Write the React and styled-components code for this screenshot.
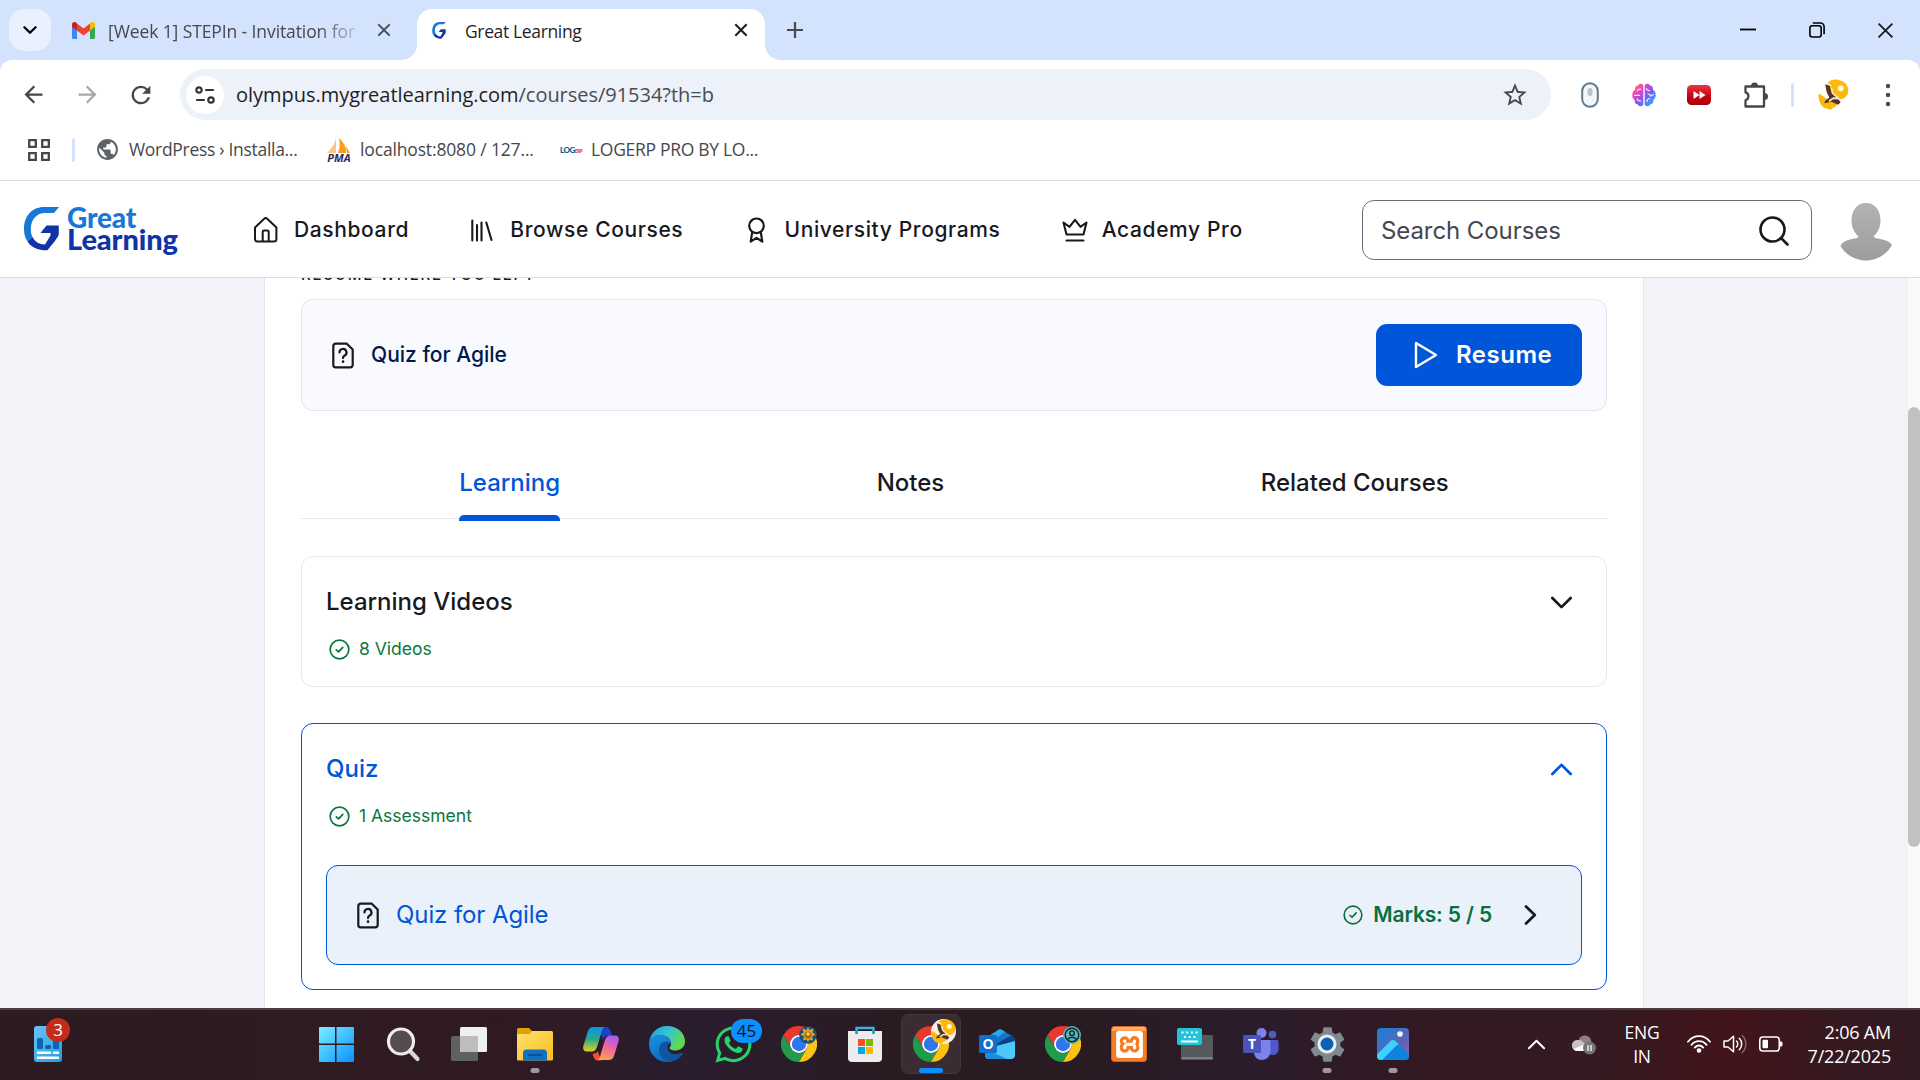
import React from "react";
import styled, { createGlobalStyle } from "styled-components";
import { MdPublic, MdStarBorder, MdSettings, MdArrowBack, MdArrowForward, MdRefresh } from "react-icons/md";
import { FaWhatsapp } from "react-icons/fa";
import { SiXampp } from "react-icons/si";

const GlobalStyle = createGlobalStyle`
  * { box-sizing: border-box; }
  body { margin: 0; background: #fff; overflow: hidden; }
  svg { display: block; flex: none; }
`;

const system = `"Open Sans", "Noto Sans", sans-serif`;
const inter = `Inter, "Liberation Sans", sans-serif`;

const Screen = styled.div`
  width: 1920px;
  height: 1080px;
  display: flex;
  flex-direction: column;
  overflow: hidden;
  font-family: ${inter};
  color: #18191f;
`;

const Label = styled.span`
  white-space: nowrap;
  font-size: ${(p) => p.$size}px;
  font-weight: ${(p) => p.$weight || 400};
  letter-spacing: ${(p) => p.$track || 0}px;
  color: ${(p) => p.$color || "inherit"};
  line-height: 1.3;
`;

/* ---------- Browser chrome ---------- */

const TabStrip = styled.div`
  height: 60px;
  flex: none;
  display: flex;
  background: #d3e2fd;
  font-family: ${system};
`;

const TabSearch = styled.button`
  width: 42px;
  height: 42px;
  margin: 9px 0 0 9px;
  padding: 0;
  border: 0;
  border-radius: 15px;
  background: #e9f0fe;
  display: grid;
  place-items: center;
`;

const Tab = styled.div`
  display: flex;
  align-items: center;
  height: ${(p) => (p.$active ? 51 : 42)}px;
  margin-top: 9px;
  width: ${(p) => p.$width}px;
  padding: 0 ${(p) => p.$right}px ${(p) => (p.$active ? 9 : 0)}px ${(p) => p.$left}px;
  background: ${(p) => (p.$active ? "#fff" : "transparent")};
  border-radius: 15px 15px 0 0;
  color: ${(p) => (p.$active ? "#1f1f1f" : "#46484c")};
  position: relative;

  &::before, &::after {
    content: "";
    display: ${(p) => (p.$active ? "block" : "none")};
    position: absolute;
    bottom: 0;
    width: 15px;
    height: 15px;
  }
  &::before { left: -15px; background: radial-gradient(circle at 0 0, transparent 14.5px, #fff 15px); }
  &::after { right: -15px; background: radial-gradient(circle at 100% 0, transparent 14.5px, #fff 15px); }
`;

const TabTitle = styled.div`
  flex: 1;
  margin-left: ${(p) => p.$gap}px;
  margin-right: 19px;
  font-size: 17.5px;
  letter-spacing: ${(p) => p.$track}px;
  line-height: 24px;
  padding-top: 2px;
  white-space: nowrap;
  overflow: hidden;
  ${(p) => p.$fade && "mask-image: linear-gradient(90deg, #000 84%, rgba(0,0,0,.15));"}
`;

const NewTab = styled.div`
  width: 24px;
  margin-left: 18px;
  height: 60px;
  display: grid;
  place-items: center;
`;

const WindowControls = styled.div`
  margin-left: auto;
  display: flex;
`;

const WindowButton = styled.div`
  width: 69px;
  height: 60px;
  display: grid;
  place-items: center;
`;

const ToolbarWrap = styled.div`
  background: #d3e2fd;
  flex: none;
`;

const Toolbar = styled.div`
  height: 69px;
  display: flex;
  align-items: center;
  background: #fff;
  border-radius: 12px 12px 0 0;
  font-family: ${system};
`;

const NavButtons = styled.div`
  width: 180px;
  padding-left: 6px;
  display: flex;
`;

const ToolButton = styled.div`
  width: ${(p) => p.$w || 54}px;
  height: 51px;
  display: grid;
  place-items: center;
  color: ${(p) => (p.$dim ? "#a7a8a9" : "#454749")};
`;

const Omnibox = styled.div`
  width: 1371px;
  height: 51px;
  border-radius: 26px;
  background: #ecf1fa;
  display: flex;
  align-items: center;
  padding: 0 22px 0 6px;
`;

const SiteInfo = styled.div`
  width: 38px;
  height: 38px;
  margin-right: 12px;
  border-radius: 50%;
  background: #fff;
  display: grid;
  place-items: center;
`;

const Url = styled.div`
  flex: 1;
  font-size: 20px;
  letter-spacing: -0.03px;
  color: #4a4c50;
  line-height: 30px;
  b { font-weight: 400; color: #1f1f1f; }
`;

const Extensions = styled.div`
  margin-left: 12px;
  display: flex;
  align-items: center;
`;

const Divider = styled.div`
  width: 3px;
  height: 24px;
  border-radius: 2px;
  background: #d3e2fd;
`;

const BookmarkBar = styled.div`
  height: 51px;
  flex: none;
  display: flex;
  align-items: center;
  padding: 0 0 10px 28px;
  background: #fff;
  color: #46484c;
  font-family: ${system};
`;

const Bookmark = styled.div`
  width: ${(p) => p.$w}px;
  display: flex;
  align-items: center;
  gap: ${(p) => p.$gap}px;
`;

const PmaIcon = styled.div`
  width: 26px;
  margin-left: -1px;
  display: flex;
  flex-direction: column;
  align-items: center;
  font: italic 700 11px/9px "Open Sans", sans-serif;
  color: #2b2b63;
`;

const LogIcon = styled.div`
  width: 22px;
  font: 900 8px/10px Lato, sans-serif;
  letter-spacing: -0.5px;
  color: #0b5c93;
  display: flex;
  align-items: flex-end;
  span { color: #ee3a6c; font-size: 5px; line-height: 8px; letter-spacing: -0.7px; }
`;

/* ---------- Site header ---------- */

const Header = styled.header`
  height: 98px;
  flex: none;
  display: flex;
  align-items: center;
  border-top: 1px solid #dedee0;
  border-bottom: 1px solid #dcdde0;
  padding: 2px 27px 0 24px;
  background: #fff;
`;

const Logo = styled.div`
  width: 230px;
  display: flex;
  align-items: center;
  gap: 8px;
  padding-bottom: 3px;
`;

const LogoText = styled.div`
  display: flex;
  flex-direction: column;
  font-family: Lato, sans-serif;
  font-weight: 900;
  font-size: 28px;
  line-height: 22px;
  padding-bottom: 2px;
  color: #1034a6;
  span:first-child { color: #1878d8; letter-spacing: -0.2px; }
  span:last-child { font-size: 29px; letter-spacing: -0.1px; }
`;

const Nav = styled.nav`
  display: flex;
  gap: 61.2px;
`;

const NavItem = styled.a`
  display: flex;
  align-items: center;
  gap: 14px;
`;

const SearchBox = styled.div`
  width: 450px;
  height: 60px;
  margin-left: auto;
  border: 1px solid #6b6d7c;
  border-radius: 12px;
  display: flex;
  align-items: center;
  justify-content: space-between;
  padding: 1px 22px 0 18px;
`;

const Avatar = styled.div`
  width: 54px;
  margin: 3px 0 0 27px;
`;

/* ---------- Course page ---------- */

const Page = styled.div`
  height: 730px;
  flex: none;
  display: flex;
  justify-content: space-between;
  overflow: hidden;
  background: #f2f3f8;
`;

const Panel = styled.main`
  width: 1380px;
  margin-left: 264px;
  padding: 0 36px;
  border: solid #e4e5ea;
  border-width: 0 1px;
  background: #fff;
`;

const Eyebrow = styled.div`
  height: 21px;
  display: flow-root;
  font-size: 15px;
  font-weight: 500;
  letter-spacing: 1.8px;
  line-height: 20px;
  white-space: nowrap;
  span { display: block; margin-top: -13px; }
`;

const ResumeCard = styled.section`
  height: 112px;
  padding: 0 24px 0 29px;
  display: flex;
  align-items: center;
  border: 1px solid #e3e5ec;
  border-radius: 12px;
  background: #f9faff;
`;

const ResumeButton = styled.button`
  width: 206px;
  height: 62px;
  margin-left: auto;
  padding: 0 0 0 38px;
  border: 0;
  border-radius: 11px;
  background: #0056d8;
  color: #fff;
  font-family: inherit;
  display: flex;
  align-items: center;
  gap: 18px;
`;

const CourseTabs = styled.div`
  height: 108px;
  margin-bottom: 37px;
  display: flex;
  justify-content: space-around;
  align-items: flex-end;
  border-bottom: 1px solid #e8e8ea;
`;

const CourseTab = styled.div`
  height: 56px;
  padding-top: 2px;
  margin-bottom: -3px;
  color: ${(p) => (p.$active ? "#0056d8" : "#18191f")};
  display: flex;
  flex-direction: column;
  justify-content: space-between;
  &::after {
    content: "";
    height: 6px;
    border-radius: 5px 5px 0 0;
    background: ${(p) => (p.$active ? "#0056d8" : "transparent")};
  }
`;

const Module = styled.section`
  height: ${(p) => p.$height}px;
  margin-bottom: 36px;
  padding: 29px 24px 24px;
  border: 1px solid ${(p) => (p.$open ? "#0056d8" : "#e8e8ea")};
  border-radius: 12px;
`;

const ModuleHead = styled.div`
  display: flex;
  justify-content: space-between;
  align-items: center;
  height: 32px;
  padding-right: 9px;
  color: ${(p) => (p.$open ? "#0056d8" : "#18191f")};
`;

const ModuleMeta = styled.div`
  margin-top: 19px;
  height: 24px;
  padding-left: 3px;
  display: flex;
  align-items: center;
  gap: 9px;
  color: #08783f;
`;

const QuizRow = styled.div`
  margin-top: 37px;
  height: 100px;
  padding: 0 44px 0 29px;
  display: flex;
  align-items: center;
  border: 1px solid #0056d8;
  border-radius: 12px;
  background: #eaf1fb;
`;

const RowTitle = styled.div`
  margin-left: 16px;
  display: flex;
`;

const Marks = styled.div`
  margin-left: auto;
  display: flex;
  align-items: center;
  gap: 10px;
  margin-right: 32px;
  color: #08703c;
`;

const Scrollbar = styled.div`
  width: 12px;
  padding-top: 129px;
  background: #fafafa;
`;

const Thumb = styled.div`
  height: 440px;
  border-radius: 6px;
  background: #c1c1c1;
`;

/* ---------- Taskbar ---------- */

const Taskbar = styled.footer`
  height: 72px;
  flex: none;
  display: flex;
  align-items: center;
  padding-bottom: 2px;
  border-top: 2px solid #4b3d43;
  background: linear-gradient(90deg, #2c1b21 0, #301a21 26%, #2a1d2e 36%, #2a1b22 47%, #2a1a21 56%, #2b1c2c 65%, #331921 75%, #341a21 83%, #42141a 90%, #361920 96%, #311a21 100%);
  font-family: ${system};
  color: #fff;
`;

const WidgetSlot = styled.div`
  width: 304px;
  padding-left: 34px;
`;

const AppSlot = styled.div`
  width: 66px;
  height: 68px;
  display: grid;
  place-items: center;
  position: relative;
  &::after {
    content: "";
    display: ${(p) => (p.$run || p.$active ? "block" : "none")};
    position: absolute;
    left: 50%;
    bottom: 5px;
    width: ${(p) => (p.$active ? 24 : 9)}px;
    height: 5px;
    transform: translateX(-50%);
    border-radius: 3px;
    background: ${(p) => (p.$active ? "#0a91ff" : "#a3989d")};
  }
`;

const Highlight = styled.div`
  width: 60px;
  height: 60px;
  border-radius: 7px;
  border: 1px solid #43353b;
  background: #3a2c32;
  display: grid;
  place-items: center;
`;

const AppIcon = styled.div`
  width: ${(p) => p.$w || 36}px;
  height: 36px;
  position: relative;
  display: grid;
  place-items: center;
`;

const Badge = styled.span`
  position: absolute;
  left: ${(p) => p.$x}px;
  top: ${(p) => p.$y}px;
  width: ${(p) => p.$w}px;
  height: 24px;
  border-radius: 12px;
  background: ${(p) => p.$bg};
  color: ${(p) => p.$fg};
  font-size: 17px;
  line-height: 24px;
  text-align: center;
`;

const Overlay = styled.div`
  position: absolute;
  left: ${(p) => p.$x}px;
  top: ${(p) => p.$y}px;
`;

const Tray = styled.div`
  margin-left: auto;
  padding-right: 29px;
  display: flex;
  align-items: center;
  gap: 12px;
`;

const TrayText = styled.div`
  width: ${(p) => p.$w}px;
  padding-bottom: 1px;
  text-align: ${(p) => p.$align};
  font-size: ${(p) => p.$size}px;
  line-height: 24px;
  letter-spacing: ${(p) => p.$track}px;
  white-space: nowrap;
`;

const Gap = styled.div`
  width: ${(p) => p.$w}px;
`;

/* ---------- Drawings ---------- */

const line = { fill: "none", stroke: "currentColor", strokeLinecap: "round", strokeLinejoin: "round" };

const Cross = ({ size, w }) => (
  <svg width={size} height={size} viewBox="0 0 16 16" {...line} strokeLinecap="butt" strokeWidth={w}>
    <path d="M1.5 1.5l13 13M14.5 1.5l-13 13" />
  </svg>
);

const GmailIcon = () => (
  <svg width="23" height="17" viewBox="0 0 23 17">
    <path d="M0 3v12.500a1.500 1.500 0 0 0 1.500 1.500H5V7z" fill="#4285f4" />
    <path d="M18 7v10h3.500a1.500 1.500 0 0 0 1.500-1.500V3z" fill="#34a853" />
    <path d="M18 2v6.500l5-3.800V2.500C23 0 20.300-.8 18.500.8z" fill="#fbbc04" />
    <path d="M0 2.500v2.200l5 3.800V2L4.500.8C2.700-.8 0 0 0 2.500z" fill="#c5221f" />
    <path d="M5 1.500l6.500 5 6.500-5v7l-6.500 5-6.500-5z" fill="#ea4335" />
  </svg>
);

const GMark = ({ w, h }) => (
  <svg width={w} height={h} viewBox="0 0 35 44">
    <path d="M35 0H20C8 0 0 9 0 22c0 5 1 9 3.500 12.500L8.500 30C7.300 28 6.800 25 6.800 22 7 12 13 6 21 6h9z" fill="#1878d8" />
    <path d="M3.500 34.500L8.500 30c2 4.500 6.500 7.500 12.500 7.500l5.500-9V26h-10l6-7.500h12.300V27c0 3-8 12-11.300 16.300C14 43.500 7 40 3.500 34.500z" fill="#1034a6" />
  </svg>
);

const TuneIcon = () => (
  <svg width="20" height="18" viewBox="0 0 20 18" {...line} strokeWidth="2.200" color="#333">
    <circle cx="4" cy="4" r="2.700" /><path d="M11 4h7" />
    <circle cx="16" cy="14" r="2.700" /><path d="M2 14h7" />
  </svg>
);

const MouseIcon = () => (
  <svg width="18" height="26" viewBox="0 0 18 26">
    <rect x="1.200" y="1.200" width="15.600" height="23.600" rx="7.800" fill="#f4f7f9" stroke="#5f7d8e" strokeWidth="2" />
    <rect x="6.500" y="6" width="5" height="8" rx="2.500" fill="#b5c4ce" />
  </svg>
);

const BrainIcon = () => (
  <svg width="24" height="24" viewBox="0 0 24 24">
    <defs>
      <linearGradient id="brain" gradientUnits="userSpaceOnUse" x1="2" y1="1" x2="22" y2="22">
        <stop offset="0" stopColor="#ff8a3c" /><stop offset=".28" stopColor="#ef3fc4" />
        <stop offset=".6" stopColor="#7a5cf5" /><stop offset="1" stopColor="#1fb6ff" />
      </linearGradient>
    </defs>
    <path d="M11.300 2.500C10.500.3 7 .2 6 2.500 3.500 2.500 2.500 5 3.200 6.800 1 8 .3 10 .3 12s.8 4 2.400 5c-.5 2.500.8 4 2.800 4.300 1 2.500 5 2.800 5.800.2z" fill="url(#brain)" />
    <path d="M12.700 2.500C13.500.3 17 .2 18 2.500c2.500 0 3.500 2.500 2.800 4.300 2.200 1.200 2.900 3.200 2.900 5.200s-.8 4-2.400 5c.5 2.500-.8 4-2.800 4.300-1 2.500-5 2.800-5.800.2z" fill="url(#brain)" />
    <g fill="none" stroke="#f6e9ff" strokeWidth="1.200" strokeLinecap="round">
      <path d="M5.200 8C6 6.500 7.500 6 9 6.300M2.500 12.300h5.200M5.200 16c.5 1.600 2 2.200 3.500 1.800" />
      <path d="M14.500 5.500c.3 1.500 1.700 2.300 3 2.200M16 11c1.500 0 2.500.7 2.800 2M21.500 11.500l-2.700 1.500M15 18.500c0-2 1-3 2.800-3" />
    </g>
  </svg>
);

const ForwardIcon = () => (
  <svg width="24" height="20" viewBox="0 0 24 20">
    <defs><linearGradient id="ff" x1="0" y1="0" x2="0" y2="1"><stop offset="0" stopColor="#f0353f" /><stop offset=".6" stopColor="#c4000e" /><stop offset="1" stopColor="#a8000a" /></linearGradient></defs>
    <rect width="24" height="20" rx="4.500" fill="url(#ff)" />
    <path d="M6.500 6l6 4-6 4zM12.500 6l6 4-6 4z" fill="#fff" />
  </svg>
);

const PuzzleIcon = () => (
  <svg width="26" height="26" viewBox="0 0 26 26">
    <path d="M2.500 4.500H21v20H2.500v-6.200a4.200 4.200 0 0 0 0-8z" {...line} strokeWidth="2.300" />
    <path d="M8 4a3.500 3.500 0 0 1 7 0zM21.500 11a3.500 3.500 0 0 1 0 7z" fill="currentColor" />
  </svg>
);

const ProfileIcon = ({ size, disc }) => (
  <svg width={size} height={size} viewBox="0 0 30 30">
    {disc && <circle cx="15" cy="15" r="15" fill="#f3f0ea" />}
    <path d="M10 3C13-.5 20-.5 25 3c4 3 5.500 8 3.500 12-1.500 3-5 5-8.500 4.500C14 19 8 9 10 3z" fill="#fcb90a" />
    <path d="M.5 14c2.500 1 5 3 8 5 4 2.500 8 3 10.500 4-.5 3-3 5-5 5-1 2-4 2-5 .500C4 29 0 22 .5 14z" fill="#fcb90a" />
    <path d="M7 5l4.500 1.500c0 3 1.500 6 4.500 8.500l6 7.500-2.500 2.500-6.500-3-7 1.500 1-2.500 4-3L8.500 13z" fill="#5a331c" />
    <path d="M13 8.500l1 5 6 5.500-5-.5-4.500 3M9 4.500l4 2" stroke="#efe9e2" strokeWidth="1.600" fill="none" />
    <circle cx="22" cy="9" r="3" fill="#fff3b8" /><circle cx="22" cy="9" r="1.600" fill="#fff" />
  </svg>
);

const HouseIcon = () => (
  <svg width="26" height="26" viewBox="1 0 26 26" {...line} strokeWidth="2">
    <path d="M2 10.500L11.200 1.800c1-1 2-1 3 0L23.400 10.500V22a2.500 2.500 0 0 1-2.500 2.500H4.500A2.500 2.500 0 0 1 2 22z" />
    <path d="M9.700 24v-9.200c0-1 .5-1.400 1.400-1.400h3.200c.9 0 1.400.4 1.400 1.400V24" />
  </svg>
);

const LibraryIcon = () => (
  <svg width="26" height="26" viewBox="0 0 26 26" {...line} strokeWidth="2.100">
    <path d="M2.300 3.500v20M7 8v15.500M11.500 5.500v18M16.300 5.500l5.200 17.500" />
  </svg>
);

const AwardIcon = () => (
  <svg width="26" height="26" viewBox="0 0 26 26" {...line} strokeWidth="2.200">
    <circle cx="12.500" cy="8.800" r="7.300" />
    <path d="M8.200 15.200L6.700 24.600 12.500 20.800l5.800 3.800-1.500-9.400" />
  </svg>
);

const CrownIcon = () => (
  <svg width="26" height="26" viewBox="0 0 26 26" {...line} strokeWidth="2.100">
    <path d="M4.500 17.500L1.500 5.500 7.500 9.800l5.500-7 5.500 7 6-4.300-3 12zM4.500 23.500h17" />
  </svg>
);

const FileQuestion = () => (
  <svg width="24" height="27" viewBox="0 0 24 27" {...line} strokeWidth="2.200">
    <path d="M2.300 4A2.300 2.300 0 0 1 4.600 1.700h11.200L21.700 7.500V23a2.300 2.300 0 0 1-2.300 2.300H4.600A2.300 2.300 0 0 1 2.300 23z" />
    <path d="M8.500 10.500a3.500 3.500 0 1 1 5.200 3c-1.200.7-1.700 1.200-1.700 2.600" /><path d="M12 19.600v.1" strokeWidth="2.600" />
  </svg>
);

const CheckCircle = ({ size = 21 }) => (
  <svg width={size} height={size} viewBox="0 0 21 21" {...line} strokeWidth="1.700">
    <circle cx="10.500" cy="10.500" r="9.300" /><path d="M7.300 10.800l2.200 2.100 4.300-4.600" />
  </svg>
);

const Chevron = ({ rotate = 0, size = 22, w = 2.6 }) => (
  <svg width={size} height={size} viewBox="0 0 22 22" {...line} strokeWidth={w}>
    <path d="M2.200 6.700L11 15.400l8.800-8.700" transform={`rotate(${rotate} 11 11)`} />
  </svg>
);

const ChromeIcon = () => (
  <svg width="36" height="36" viewBox="0 0 36 36">
    <path d="M18 9h15.590A18 18 0 0 0 2.410 9l7.800 13.500A9 9 0 0 1 18 9z" fill="#e8392c" />
    <path d="M10.200 22.500L2.410 9A18 18 0 0 0 18 36l7.800-13.500a9 9 0 0 1-15.600 0z" fill="#1f9c49" />
    <path d="M25.800 22.500L18 36A18 18 0 0 0 33.590 9H18a9 9 0 0 1 7.800 13.500z" fill="#fcc312" />
    <circle cx="18" cy="18" r="9" fill="#fff" /><circle cx="18" cy="18" r="7.200" fill="#2f77ee" />
  </svg>
);

const WidgetIcon = () => (
  <svg width="28" height="36" viewBox="0 0 28 36">
    <defs><linearGradient id="wd" x1="0" y1="0" x2="1" y2="1"><stop offset="0" stopColor="#6cc1f5" /><stop offset="1" stopColor="#1ba0e0" /></linearGradient></defs>
    <rect width="28" height="36" rx="3" fill="url(#wd)" />
    <rect x="3" y="12" width="6" height="11" rx="1.500" fill="#0c62b4" /><rect x="11" y="19" width="6" height="4" rx="1.500" fill="#0c62b4" /><rect x="19" y="14" width="6" height="9" rx="1.500" fill="#0c62b4" />
    <path d="M4 26.700h12M20 26.700h4M4 31.700h20" stroke="#fff" strokeWidth="2.600" strokeLinecap="round" />
  </svg>
);

const StartIcon = () => (
  <svg width="36" height="36" viewBox="2 0 36 36">
    <defs><linearGradient id="win" x1="0" y1="0" x2="36" y2="36" gradientUnits="userSpaceOnUse"><stop offset="0" stopColor="#7ff3ff" /><stop offset="1" stopColor="#0a92ff" /></linearGradient></defs>
    <path d="M3 1h15v16.500H2V2a1 1 0 0 1 1-1zM19.500 1H36a1 1 0 0 1 1 1v15.500H19.500zM2 19h16v17H3a1 1 0 0 1-1-1zM19.500 19H37v16a1 1 0 0 1-1 1H19.500z" fill="url(#win)" />
  </svg>
);

const SearchAppIcon = () => (
  <svg width="36" height="36" viewBox="0 0 36 36">
    <path d="M25 25l7.500 8" stroke="#d5d8da" strokeWidth="4.200" strokeLinecap="round" />
    <circle cx="16" cy="15.500" r="12.500" fill="#574a50" stroke="#eceded" strokeWidth="3.200" />
  </svg>
);

const TaskViewIcon = () => (
  <svg width="36" height="36" viewBox="0 0 36 36">
    <rect x="9" y="1" width="27" height="25" rx="1.500" fill="#f0f0f0" />
    <rect x="0" y="10" width="27" height="25" rx="1.500" fill="#5f6060" />
    <rect x="9" y="10" width="18" height="16" fill="#bdbdbd" />
  </svg>
);

const FolderIcon = () => (
  <svg width="36" height="36" viewBox="0 0 36 36">
    <defs><linearGradient id="fd" x1="0" y1="0" x2="1" y2="1"><stop offset="0" stopColor="#ffe071" /><stop offset="1" stopColor="#fbbd1c" /></linearGradient></defs>
    <path d="M0 3.500A1.500 1.500 0 0 1 1.500 2H12l3 3v8H0z" fill="#dfa006" />
    <path d="M0 8h12.500L15 5h19.500A1.500 1.500 0 0 1 36 6.500V33.500a1 1 0 0 1-1 1H1a1 1 0 0 1-1-1z" fill="url(#fd)" />
    <path d="M6 34.500V27a3.500 3.500 0 0 1 3.500-3.500h17A3.500 3.500 0 0 1 30 27v7.500z" fill="#0f70c4" />
    <path d="M11.500 29h13" stroke="#0a4684" strokeWidth="1.600" strokeLinecap="round" />
  </svg>
);

const CopilotIcon = () => (
  <svg width="36" height="36" viewBox="0 0 36 36">
    <defs>
      <linearGradient id="cpa" x1="0" y1="0" x2="0" y2="1"><stop offset="0" stopColor="#1190e8" /><stop offset=".5" stopColor="#28a990" /><stop offset="1" stopColor="#e4cf20" /></linearGradient>
      <linearGradient id="cpb" x1=".6" y1="0" x2=".3" y2="1"><stop offset="0" stopColor="#a65cf0" /><stop offset=".5" stopColor="#f2669b" /><stop offset="1" stopColor="#fda052" /></linearGradient>
    </defs>
    <path d="M16 1h7c3 0 4 2 5 5l1 4h-4c-3 0-4 1-5 4z" fill="#1c3fc8" />
    <path d="M9.500 28c2-1 4 0 5-3l4 9.500h-3.500c-3 0-4-2-5.500-6.500z" fill="#f0522e" />
    <path d="M10 1h11.500c-2 1-2.500 3-3.500 7l-4 13c-1 3-3 4.500-5.500 4.500H4c-3.500 0-4.500-3-3.500-6L5 5c1-2.500 2.500-4 5-4z" fill="url(#cpa)" />
    <path d="M26 34H14.500c2-1 2.500-3 3.500-7l4-13c1-3 3-4.500 5.500-4.500H32c3.500 0 4.500 3 3.500 6L31 30c-1 2.500-2.500 4-5 4z" fill="url(#cpb)" />
  </svg>
);

const EdgeIcon = () => (
  <svg width="36" height="36" viewBox="0 0 36 36">
    <defs>
      <linearGradient id="eda" x1="0" y1="0" x2="1" y2=".4"><stop offset="0" stopColor="#1c9fe0" /><stop offset=".55" stopColor="#33c5d0" /><stop offset="1" stopColor="#63d94f" /></linearGradient>
      <linearGradient id="edb" x1="0" y1="0" x2=".4" y2="1"><stop offset="0" stopColor="#1d94dd" /><stop offset="1" stopColor="#0a6bc9" /></linearGradient>
    </defs>
    <path d="M0 17C1 7 8.500 0 18 0c10.500 0 18 7 18 15.500 0 5.500-4.500 9-9.500 9-4 0-6.500-1.500-6-3 1-1 1.500-2 1.500-4 0-4.500-4.500-8.500-10.500-8.500C6 9 1.500 12 0 17z" fill="url(#eda)" />
    <path d="M0 17c1.500-5 6-8 11.500-8 6 0 10.500 4 10.500 8.500-3-2-8 .5-8 6 0 6.500 6 11 13 9.500C23.500 35.500 21 36 18 36 8 36-.5 28 0 17z" fill="url(#edb)" />
    <path d="M18.500 15.500C13 15 10 19 10 23.500c0 6.500 5 12 12 12 6-1 9.500-4 11.500-7.500.5-1-.5-1.500-1.500-1-7 3-13 0-13.500-5-.2-2.500.8-3.500 2-4.500-.500-1-1-1.500-2-2z" fill="#10559f" />
  </svg>
);

const StoreIcon = () => (
  <svg width="36" height="36" viewBox="0 0 36 36">
    <path d="M9.500 8V2h17v6" fill="none" stroke="#37b3e6" strokeWidth="2.400" />
    <path d="M1 5h34v27a4 4 0 0 1-4 4H5a4 4 0 0 1-4-4z" fill="#ececec" />
    <path d="M9.500 5v3M26.500 5v3" stroke="#188bc5" strokeWidth="2.400" />
    <path d="M11 13h7v7h-7z" fill="#f25022" /><path d="M19 13h7v7h-7z" fill="#7fba00" /><path d="M11 21h7v7h-7z" fill="#00a4ef" /><path d="M19 21h7v7h-7z" fill="#ffb900" />
  </svg>
);

const Letter = styled.text`
  font: 700 ${(p) => p.$s}px "Open Sans", sans-serif;
  fill: #fff;
  text-anchor: middle;
`;

const OutlookIcon = () => (
  <svg width="36" height="36" viewBox="0 0 36 36">
    <path d="M7 12L19.500 3.800a3 3 0 0 1 3.200 0L36 12.500V19L18 29 7 22z" fill="#1683d4" />
    <path d="M10 10l9.500-6.200a3 3 0 0 1 3.200 0L27 6.500 16 14z" fill="#28a8ea" />
    <path d="M17 17L32 8l4 4.500v5L18 27z" fill="#0b3f86" /><path d="M16 13L26 6l6 3.500L17 18z" fill="#1475cc" />
    <path d="M36 15v14a4 4 0 0 1-4 4H10a4 4 0 0 1-4-4v-6z" fill="#4cc9f8" /><path d="M6 23l22 10H10a4 4 0 0 1-4-4z" fill="#1b8ddb" />
    <rect x="0" y="9" width="18" height="18" rx="1.500" fill="#0f6fcd" /><Letter x="9" y="23" $s={14}>O</Letter>
  </svg>
);

const KeyboardIcon = () => (
  <svg width="36" height="36" viewBox="0 0 36 36">
    <rect x="4" y="9" width="32" height="25" rx="1.500" fill="#55595c" /><path d="M4.500 32h31" stroke="#8b8f92" strokeWidth="1.500" />
    <rect x="0" y="2" width="25" height="17" rx="2" fill="#25c3d8" />
    <path d="M4.500 6.500h16M7 11h12" stroke="#fff" strokeWidth="2" strokeDasharray="2 2.700" /><path d="M5 15.500h15" stroke="#fff" strokeWidth="2" strokeLinecap="round" />
  </svg>
);

const TeamsIcon = () => (
  <svg width="36" height="36" viewBox="0 0 36 36">
    <circle cx="29.500" cy="8.500" r="3.800" fill="#5059c9" /><path d="M25 14h9a1.500 1.500 0 0 1 1.500 1.500V23c0 4-3 6-6 6s-4.500-2-4.500-4z" fill="#5059c9" />
    <circle cx="18.500" cy="7" r="5" fill="#7b83eb" /><path d="M11 14h15a1.500 1.500 0 0 1 1.500 1.500V25c0 5-4 9-8.500 9s-8-3-8-8z" fill="#7b83eb" />
    <rect x="0" y="9" width="18" height="18" rx="1.500" fill="#4b53bc" /><Letter x="9" y="23" $s={14}>T</Letter>
  </svg>
);

const PhotosIcon = () => (
  <svg width="36" height="36" viewBox="0 0 36 36">
    <defs><linearGradient id="ph" x1="0" y1="0" x2="1" y2="1"><stop offset="0" stopColor="#1483dd" /><stop offset=".6" stopColor="#5a63b8" /><stop offset="1" stopColor="#9c5fb0" /></linearGradient></defs>
    <rect x="2" y="2" width="32" height="32" rx="4" fill="url(#ph)" />
    <path d="M7 34l14-14c1.500-1.500 3-1.500 4.500 0L34 28.500V30a4 4 0 0 1-4 4z" fill="#0f83dc" />
    <path d="M2 28.500L15.500 15c1.500-1.500 3.500-1.500 5 0l3.500 3.500c-1 0-2 .5-3 1.500L7 34H6a4 4 0 0 1-4-4z" fill="#3fd0fb" />
    <circle cx="25" cy="8" r="2.800" fill="#f5f5fb" />
  </svg>
);

const Gear = styled(MdSettings)`
  margin: -4px;
  color: #808990;
`;

const WhatsappGlyph = styled(FaWhatsapp)`
  margin: -3px;
  color: #25d366;
`;

const SettingsIcon = () => (
  <>
    <Gear size={43} />
    <Overlay $x={8} $y={8}>
      <svg width="20" height="20" viewBox="0 0 20 20"><circle cx="10" cy="10" r="8" fill="#0b62b5" stroke="#eceeef" strokeWidth="3" /></svg>
    </Overlay>
  </>
);

const XamppIcon = styled.div`
  width: 36px;
  height: 36px;
  border-radius: 3px;
  border: 1px solid #c8661c;
  background: linear-gradient(#ffb27a 0, #ffa463 10%, #f57b20 12%, #fb7a24 100%);
  display: grid;
  place-items: center;
  color: #fff;
`;

const EmblemIcon = () => (
  <svg width="18" height="18" viewBox="0 0 18 18">
    <circle cx="9" cy="9" r="8.800" fill="#16527a" />
    <path d="M9 1l1.500 3 4-1.500-1 4 3 2-3.500 2 1 4-3.500-1L9 16l-1.500-2.500-3.500 1 1-4-3.500-2 3-2-1-4 4 1.500z" fill="#dda62a" />
    <circle cx="9" cy="9" r="3.500" fill="#a8650f" /><circle cx="9" cy="8" r="1.800" fill="#f7d352" />
  </svg>
);

const PersonBadge = () => (
  <svg width="18" height="18" viewBox="0 0 18 18">
    <circle cx="9" cy="9" r="9" fill="#5ab3b8" />
    <g fill="none" stroke="#0c2a2c" strokeWidth="1.400"><circle cx="9" cy="9" r="6.800" /><circle cx="9" cy="7.200" r="2.300" /><path d="M4.500 13.500c2-3 7-3 9 0" /></g>
  </svg>
);

const CloudIcon = () => (
  <svg width="25" height="21" viewBox="0 0 25 21">
    <path d="M7 5a6.500 6.500 0 0 1 12 1l1 5H8z" fill="#8d7f85" />
    <path d="M0 11.500A5 5 0 0 1 5 6c3-.5 5 .5 7 3l7 4-4 4H5a5 5 0 0 1-5-5.500z" fill="#c9c1c4" />
    <path d="M1.500 15L11 11l5 4v2H5a5 5 0 0 1-3.500-2z" fill="#fff" />
    <circle cx="17.500" cy="14" r="6.500" fill="#767575" /><path d="M16 11v6M19 11v6" stroke="#fff" strokeWidth="1.300" />
  </svg>
);

const WifiIcon = () => (
  <svg width="24" height="18" viewBox="0 0 24 18" {...line} strokeWidth="1.800">
    <path d="M1 6.800C7-.7 17-.7 23 6.800M4.400 9.800c4.200-5 11-5 15.200 0M7.800 12.600c2.300-2.800 6.100-2.800 8.400 0" /><circle cx="12" cy="15.500" r="1.400" fill="currentColor" />
  </svg>
);

const SpeakerIcon = () => (
  <svg width="24" height="20" viewBox="0 0 24 20" {...line} strokeWidth="1.500">
    <path d="M1 7v6h4l5.500 4.800V2.200L5 7z" /><path d="M13.500 7a4.200 4.200 0 0 1 0 6M16.300 4.300a8 8 0 0 1 0 11.400" /><path d="M19.300 1.500a12 12 0 0 1 0 17" opacity=".35" />
  </svg>
);

const BatteryIcon = () => (
  <svg width="24" height="16" viewBox="0 0 24 16">
    <rect x=".8" y="1" width="19.500" height="14" rx="3" fill="none" stroke="#fff" strokeWidth="1.600" /><rect x="3.500" y="3.700" width="5.500" height="8.600" rx="1" fill="#fff" /><path d="M21 5.500h1a1.500 1.500 0 0 1 1.500 1.500v2A1.500 1.500 0 0 1 22 10.500h-1z" fill="#fff" />
  </svg>
);

/* ---------- Data ---------- */

const navItems = [
  { label: "Dashboard", Icon: HouseIcon },
  { label: "Browse Courses", Icon: LibraryIcon },
  { label: "University Programs", Icon: AwardIcon },
  { label: "Academy Pro", Icon: CrownIcon },
];

const apps = [
  { id: "start", icon: <StartIcon /> },
  { id: "search", icon: <SearchAppIcon /> },
  { id: "tasks", icon: <TaskViewIcon /> },
  { id: "files", icon: <FolderIcon />, run: true },
  { id: "copilot", icon: <CopilotIcon /> },
  { id: "edge", icon: <EdgeIcon /> },
  { id: "whatsapp", icon: <><WhatsappGlyph size={41} /><Badge $x={16} $y={-7} $w={31} $bg="#0a91ff" $fg="#10141c">45</Badge></> },
  { id: "chrome1", icon: <><ChromeIcon /><Overlay $x={18} $y={0}><EmblemIcon /></Overlay></> },
  { id: "store", icon: <StoreIcon /> },
  { id: "chrome2", active: true, icon: <><ChromeIcon /><Overlay $x={18} $y={-7}><ProfileIcon size={25} disc /></Overlay></> },
  { id: "outlook", icon: <OutlookIcon /> },
  { id: "chrome3", icon: <><ChromeIcon /><Overlay $x={18} $y={0}><PersonBadge /></Overlay></> },
  { id: "xampp", icon: <XamppIcon><SiXampp size={27} /></XamppIcon> },
  { id: "keyboard", icon: <KeyboardIcon /> },
  { id: "teams", icon: <TeamsIcon /> },
  { id: "settings", icon: <SettingsIcon />, run: true },
  { id: "photos", icon: <PhotosIcon />, run: true },
];

function Browser() {
  return (
    <>
      <TabStrip>
        <TabSearch><Chevron size={14} w={3.6} /></TabSearch>
        <Tab $width={366} $left={21} $right={26}>
          <GmailIcon />
          <TabTitle $gap={13} $track={-0.1} $fade>[Week 1] STEPIn - Invitation for</TabTitle>
          <Cross size={14} w={2.2} />
        </Tab>
        <Tab $active $width={348} $left={15} $right={17}>
          <GMark w={14} h={17} />
          <TabTitle $gap={19} $track={-0.36}>Great Learning</TabTitle>
          <Cross size={14} w={2.4} />
        </Tab>
        <NewTab>
          <svg width="16" height="16" viewBox="0 0 16 16" stroke="#46484c" strokeWidth="2.200"><path d="M8 0v16M0 8h16" /></svg>
        </NewTab>
        <WindowControls>
          <WindowButton><svg width="16" height="16" viewBox="0 0 16 16" stroke="#000" strokeWidth="1.800"><path d="M0 7.500h16" /></svg></WindowButton>
          <WindowButton>
            <svg width="16" height="16" viewBox="0 0 16 16" fill="none" stroke="#000" strokeWidth="1.600"><rect x=".9" y="3.700" width="11.300" height="11.300" rx="2.400" /><path d="M3.800 1h7.500a3.800 3.800 0 0 1 3.800 3.800v7.400" /></svg>
          </WindowButton>
          <WindowButton><Cross size={17} w={1.7} /></WindowButton>
        </WindowControls>
      </TabStrip>
      <ToolbarWrap>
        <Toolbar>
          <NavButtons>
            <ToolButton><MdArrowBack size={27} /></ToolButton>
            <ToolButton $dim><MdArrowForward size={27} /></ToolButton>
            <ToolButton><MdRefresh size={28} /></ToolButton>
          </NavButtons>
          <Omnibox>
            <SiteInfo><TuneIcon /></SiteInfo>
            <Url><b>olympus.mygreatlearning.com</b>/courses/91534?th=b</Url>
            <MdStarBorder size={28} color="#454749" />
          </Omnibox>
          <Extensions>
            <ToolButton><MouseIcon /></ToolButton>
            <ToolButton><BrainIcon /></ToolButton>
            <ToolButton $w={55}><ForwardIcon /></ToolButton>
            <ToolButton $w={59}><PuzzleIcon /></ToolButton>
            <Gap $w={6} />
            <Divider />
            <Gap $w={10} />
            <ToolButton $w={58}><ProfileIcon size={31} /></ToolButton>
            <ToolButton $w={51}>
              <svg width="6" height="24" viewBox="0 0 6 24" fill="currentColor"><circle cx="3" cy="3" r="2.200" /><circle cx="3" cy="12" r="2.200" /><circle cx="3" cy="21" r="2.200" /></svg>
            </ToolButton>
          </Extensions>
        </Toolbar>
      </ToolbarWrap>
      <BookmarkBar>
        <svg width="22" height="22" viewBox="0 0 22 22" fill="none" stroke="#454749" strokeWidth="2.300"><path d="M1.200 1.200h6.600v6.600H1.200zM14.200 1.200h6.600v6.600h-6.600zM1.200 14.200h6.600v6.600H1.200zM14.200 14.200h6.600v6.600h-6.600z" /></svg>
        <Gap $w={22} />
        <Divider />
        <Gap $w={20} />
        <Bookmark $w={232} $gap={9}>
          <MdPublic size={25} color="#5f6368" />
          <Label $size={17.5} $track={-0.3}>WordPress › Installa...</Label>
        </Bookmark>
        <Bookmark $w={233} $gap={8}>
          <PmaIcon>
            <svg width="24" height="15" viewBox="0 0 24 15"><path d="M9 0v15H0C4 11 8 6 9 0z" fill="#fbc58a" /><path d="M12 0c4 4 8 9 7 15h-8c2-5 2-10 1-15z" fill="#f89c1c" /><path d="M19 8l4 7h-3z" fill="#f89c1c" /></svg>
            PMA
          </PmaIcon>
          <Label $size={17.5} $track={-0.15}>localhost:8080 / 127...</Label>
        </Bookmark>
        <Bookmark $w={220} $gap={9}>
          <LogIcon>LOG<span>ERP</span></LogIcon>
          <Label $size={17.5} $track={-0.3}>LOGERP PRO BY LO...</Label>
        </Bookmark>
      </BookmarkBar>
    </>
  );
}

function SiteHeader() {
  return (
    <Header>
      <Logo>
        <GMark w={35} h={44} />
        <LogoText><span>Great</span><span>Learning</span></LogoText>
      </Logo>
      <Nav>
        {navItems.map(({ label, Icon }) => (
          <NavItem key={label}><Icon /><Label $size={21} $weight={500} $track={0.62}>{label}</Label></NavItem>
        ))}
      </Nav>
      <SearchBox>
        <Label $size={24} $track={-0.08} $color="#45464f">Search Courses</Label>
        <svg width="30" height="30" viewBox="0 0 30 30" {...line} strokeWidth="2.600"><circle cx="13.500" cy="13.500" r="12" /><path d="M22 22l6.500 6.500" /></svg>
      </SearchBox>
      <Avatar>
        <svg width="54" height="58" viewBox="0 0 54 58">
          <defs><linearGradient id="av" x1="0" y1="0" x2="0" y2="1"><stop offset="0" stopColor="#b3b3b3" /><stop offset="1" stopColor="#9d9d9d" /></linearGradient></defs>
          <path d="M27 0c9 0 14.500 7.500 14.500 17.500 0 7-3 12.500-7 16 1 1.500 4 2 7 2.500 5 1 10 3 11.500 6C48 51 38 57.500 27 57.500S6 51 1.500 43C3 39 8 37 13 36c3-.5 6-1 6.500-2.500-4-3.500-7-9-7-16C12.500 7.500 18 0 27 0z" fill="url(#av)" />
        </svg>
      </Avatar>
    </Header>
  );
}

function CoursePage() {
  return (
    <Page>
      <Panel>
        <Eyebrow><span>RESUME WHERE YOU LEFT</span></Eyebrow>
        <ResumeCard>
          <FileQuestion />
          <RowTitle><Label $size={21} $weight={500} $color="#00194d">Quiz for Agile</Label></RowTitle>
          <ResumeButton>
            <svg width="24" height="28" viewBox="0 0 24 28" {...line} strokeWidth="2.400"><path d="M2 2v24l20-12z" /></svg>
            <Label $size={24} $weight={600} $track={0.5}>Resume</Label>
          </ResumeButton>
        </ResumeCard>
        <CourseTabs>
          <CourseTab $active><Label $size={24} $weight={500}>Learning</Label></CourseTab>
          <CourseTab><Label $size={24} $weight={500}>Notes</Label></CourseTab>
          <CourseTab><Label $size={24} $weight={500}>Related Courses</Label></CourseTab>
        </CourseTabs>
        <Module $height={131}>
          <ModuleHead><Label $size={24} $weight={500}>Learning Videos</Label><Chevron size={23} /></ModuleHead>
          <ModuleMeta><CheckCircle /><Label $size={17.5}>8 Videos</Label></ModuleMeta>
        </Module>
        <Module $height={267} $open>
          <ModuleHead $open><Label $size={24} $weight={500}>Quiz</Label><Chevron size={23} rotate={180} /></ModuleHead>
          <ModuleMeta><CheckCircle /><Label $size={17.5}>1 Assessment</Label></ModuleMeta>
          <QuizRow>
            <FileQuestion />
            <RowTitle><Label $size={24} $track={-0.08} $color="#0056d8">Quiz for Agile</Label></RowTitle>
            <Marks><CheckCircle size={20} /><Label $size={21} $weight={600} $track={-0.15}>Marks: 5 / 5</Label></Marks>
            <svg width="13" height="20" viewBox="0 0 13 20" {...line} strokeWidth="2.700"><path d="M2 1.500l8.800 8.500L2 18.500" /></svg>
          </QuizRow>
        </Module>
      </Panel>
      <Scrollbar><Thumb /></Scrollbar>
    </Page>
  );
}

function WindowsTaskbar() {
  return (
    <Taskbar>
      <WidgetSlot>
        <AppIcon $w={28}>
          <WidgetIcon />
          <Badge $x={12} $y={-8} $w={24} $bg="#c42b1c" $fg="#fff">3</Badge>
        </AppIcon>
      </WidgetSlot>
      {apps.map((a) => (
        <AppSlot key={a.id} $run={a.run} $active={a.active}>
          {a.active ? <Highlight><AppIcon>{a.icon}</AppIcon></Highlight> : <AppIcon>{a.icon}</AppIcon>}
        </AppSlot>
      ))}
      <Tray>
        <Chevron size={19} rotate={180} w={2.3} />
        <Gap $w={2} />
        <CloudIcon />
        <Gap $w={2} />
        <TrayText $w={38} $size={17.5} $align="center" $track={-0.2}>ENG<br />IN</TrayText>
        <Gap $w={2} />
        <WifiIcon />
        <SpeakerIcon />
        <BatteryIcon />
        <TrayText $w={96} $size={18} $align="right" $track={-0.2}>2:06 AM<br />7/22/2025</TrayText>
      </Tray>
    </Taskbar>
  );
}

export default function App() {
  return (
    <Screen>
      <GlobalStyle />
      <Browser />
      <SiteHeader />
      <CoursePage />
      <WindowsTaskbar />
    </Screen>
  );
}
